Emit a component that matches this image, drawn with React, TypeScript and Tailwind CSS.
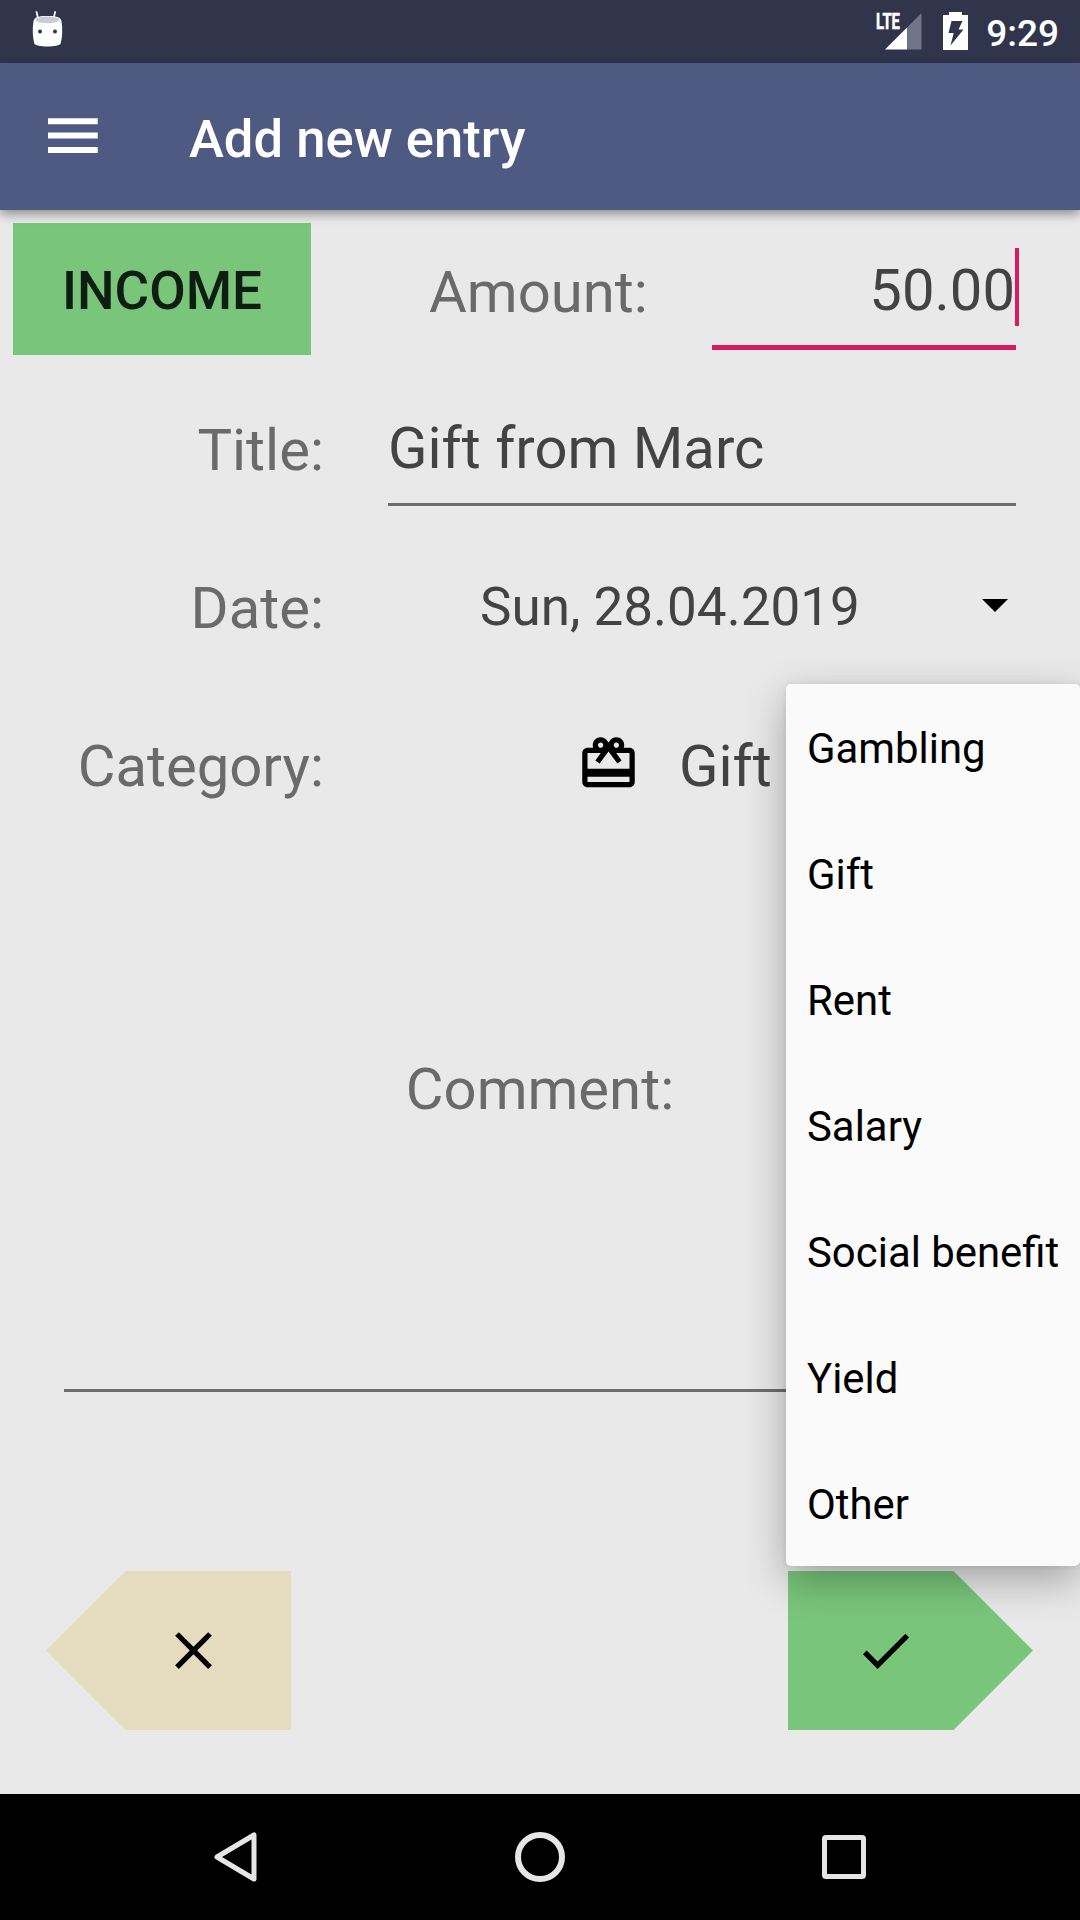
import React from "react";

const categories = ["Gambling", "Gift", "Rent", "Salary", "Social benefit", "Yield", "Other"];

function StatusBar() {
  return (
    <div className="flex h-[63px] items-start justify-between bg-[#30354c] pl-8 pr-[21px]">
      <svg className="mt-[10px] h-[38px] w-8" viewBox="0 0 32 38">
        <path d="M5.300 1.200 7.300 9M25.300 1.200 23.300 9" transform="translate(-.7 0) scale(.95 1)" stroke="#fff" strokeWidth="1.800" fill="none" />
        <path d="M1.500 11C3 6 9 6 15.500 6s12.500 0 14 5c1.200 8 1 16-.8 22.500-1 4-25.400 4-26.400 0C.5 27 .3 19 1.500 11z" fill="#fff" />
        <ellipse cx="15.500" cy="9.800" rx="12" ry="3.400" fill="#cbccd2" />
        <circle cx="8" cy="21.500" r="2" fill="#30354c" />
        <circle cx="23" cy="21.500" r="2" fill="#30354c" />
      </svg>
      <div className="flex items-start">
        <div className="relative mt-[13px] h-[37px] w-[37px]">
          <svg className="h-[37px] w-[37px]" viewBox="0 0 37 37">
            <path d="M36.500 0V36.500H22V14.500z" fill="#70758a" />
            <path d="M22 14.500V36.500H0z" fill="#fff" />
          </svg>
          <span className="absolute -left-[9px] -top-[2px] origin-left scale-x-[0.66] text-[22.5px] leading-[20px] font-bold text-white [-webkit-text-stroke:0.6px_white]">
            LTE
          </span>
        </div>
        <svg className="ml-[21px] mt-3 h-[38px] w-[25px]" viewBox="0 0 25 38">
          <path d="M6 0h13v3h6v35H0V3h6z" fill="#fff" />
          <path d="M8.500 9H19.500l-4 8.500H20.500L7.500 33.500l3.200-12.500H5.500z" fill="#30354c" />
        </svg>
        <span className="ml-[18px] mt-[11px] text-[37px] leading-[46px] font-medium text-white">9:29</span>
      </div>
    </div>
  );
}

function AppBar() {
  return (
    <header className="relative z-10 flex h-[147px] items-center bg-[#4e5a81] pl-12 shadow-[0_4px_10px_rgba(0,0,0,0.4)]">
      <svg className="-mt-[2px] h-9 w-[50px]" viewBox="0 0 50 36">
        <path d="M0 .3h49.700v6H0zM0 14.600h49.700v6H0zM0 29h49.700v6H0z" fill="#fff" />
      </svg>
      <h1 className="ml-[91px] pt-1 text-[52.6px] leading-[62px] font-medium text-white">Add new entry</h1>
    </header>
  );
}

function Label({ children }: { children: React.ReactNode }) {
  return <label className="w-[324px] text-right text-[58px] leading-[68px] text-[#6a6a6a]">{children}</label>;
}

function Underline() {
  return <div className="h-[3px] bg-[#6d6d6d]" />;
}

function EntryForm() {
  return (
    <main className="flex h-[1584px] flex-col bg-[#e9e9e9] pt-[3px] text-[#434343]">
      <div className="flex h-[158px] items-start">
        <button className="ml-[13px] mt-[10px] h-[132px] w-[298px] bg-[#79c67b] pt-1 text-[53px] leading-[62px] font-medium text-[#0f1d12]">
          INCOME
        </button>
        <label className="ml-[118px] mt-[45px] w-[220px] text-[58px] leading-[68px] text-[#6a6a6a]">Amount:</label>
        <div className="ml-[63px] mt-[35px] w-[304px]">
          <div className="flex h-[78px] items-center justify-end">
            <span className="pt-[5px] text-[58px] leading-[72px]">50.00</span>
            <span className="-mr-[3px] h-[78px] w-1 bg-[#d81b60]" />
          </div>
          <div className="mt-[19px] h-[5px] bg-[#d81b60]" />
        </div>
      </div>
      <div className="flex h-[158px] items-center">
        <Label>Title:</Label>
        <div className="ml-16 mt-[21px] w-[628px]">
          <div className="-mt-px text-[58px] leading-[68px]">Gift from Marc</div>
          <div className="h-[21px]" />
          <Underline />
        </div>
      </div>
      <div className="flex h-[158px] items-center">
        <Label>Date:</Label>
        <div className="-mt-[3px] ml-[156px] w-[502px] text-[53px] leading-[62px]">Sun, 28.04.2019</div>
        <svg className="-mt-[5px] h-[13px] w-[26px]" viewBox="0 0 26 13">
          <path d="M0 0H26L13 13z" fill="#000" />
        </svg>
      </div>
      <div className="flex h-[158px] items-center">
        <Label>Category:</Label>
        <svg className="-mt-[6px] ml-[253px] h-[63px] w-[63px]" viewBox="0 0 24 24" fill="#000">
          <path d="M20 6h-2.18c.11-.31.18-.65.18-1 0-1.66-1.34-3-3-3-1.05 0-1.96.54-2.5 1.35l-.5.67-.5-.68C10.96 2.54 10.05 2 9 2 7.34 2 6 3.34 6 5c0 .35.07.69.18 1H4c-1.11 0-1.99.89-1.99 2L2 19c0 1.11.89 2 2 2h16c1.11 0 2-.89 2-2V8c0-1.11-.89-2-2-2zm-5-2c.55 0 1 .45 1 1s-.45 1-1 1-1-.45-1-1 .45-1 1-1zM9 4c.55 0 1 .45 1 1s-.45 1-1 1-1-.45-1-1 .45-1 1-1zm11 15H4v-2h16v2zm0-5H4V8h5.080L7 10.830 8.620 12 11 8.760l1-1.360 1 1.360L15.380 12 17 10.830 14.920 8H20v6z" />
        </svg>
        <span className="ml-[39px] text-[58px] leading-[68px]">Gift</span>
      </div>
      <div className="mx-16 flex h-[547px] flex-col justify-between pt-[210px]">
        <label className="text-center text-[58px] leading-[68px] text-[#6a6a6a]">Comment:</label>
        <Underline />
      </div>
      <div className="mt-[179px] flex justify-between pl-[46px] pr-[47px]">
        <button className="flex h-[159px] w-[245px] items-center bg-[#e5dbbf] pl-[116px] [clip-path:polygon(0_50%,79.500px_0,100%_0,100%_100%,79.500px_100%)]">
          <svg className="h-[63px] w-[63px]" viewBox="0 0 24 24">
            <path d="M19 6.410 17.590 5 12 10.590 6.410 5 5 6.410 10.590 12 5 17.590 6.410 19 12 13.410 17.590 19 19 17.590 13.410 12z" />
          </svg>
        </button>
        <button className="flex h-[159px] w-[245px] items-center bg-[#79c67b] pl-[66px] [clip-path:polygon(0_0,165.500px_0,100%_50%,165.500px_100%,0_100%)]">
          <svg className="h-[63px] w-[63px]" viewBox="0 0 24 24">
            <path d="M9 16.170 4.830 12l-1.420 1.410L9 19 21 7l-1.410-1.410z" />
          </svg>
        </button>
      </div>
    </main>
  );
}

function CategoryMenu() {
  return (
    <ul className="absolute right-0 top-[684px] z-20 w-[294px] rounded-[5px] bg-[#fafafa] shadow-[0_14px_42px_rgba(0,0,0,0.3),0_0_6px_rgba(0,0,0,0.08)]">
      {categories.map((name) => (
        <li key={name} className="flex h-[126px] items-center pl-[21px] pt-1 text-[41.9px] leading-[50px] whitespace-nowrap text-black">
          {name}
        </li>
      ))}
    </ul>
  );
}

function NavBar() {
  return (
    <nav className="flex h-[126px] items-center bg-black pl-[215px]" aria-label="System">
      <svg className="-ml-px h-[50px] w-[43px]" viewBox="0 0 43 50">
        <path d="M40 3V47L3 25z" fill="none" stroke="#e6e6e6" strokeWidth="5" strokeLinejoin="round" />
      </svg>
      <div className="ml-[258px] h-[50px] w-[50px] rounded-full border-[6px] border-[#e6e6e6]" />
      <div className="ml-[257px] h-11 w-11 rounded-[4px] border-[5px] border-[#e6e6e6]" />
    </nav>
  );
}

export default function App() {
  return (
    <div className="relative h-[1920px] w-[1080px] overflow-hidden font-['Roboto',sans-serif]">
      <StatusBar />
      <AppBar />
      <EntryForm />
      <CategoryMenu />
      <NavBar />
    </div>
  );
}
